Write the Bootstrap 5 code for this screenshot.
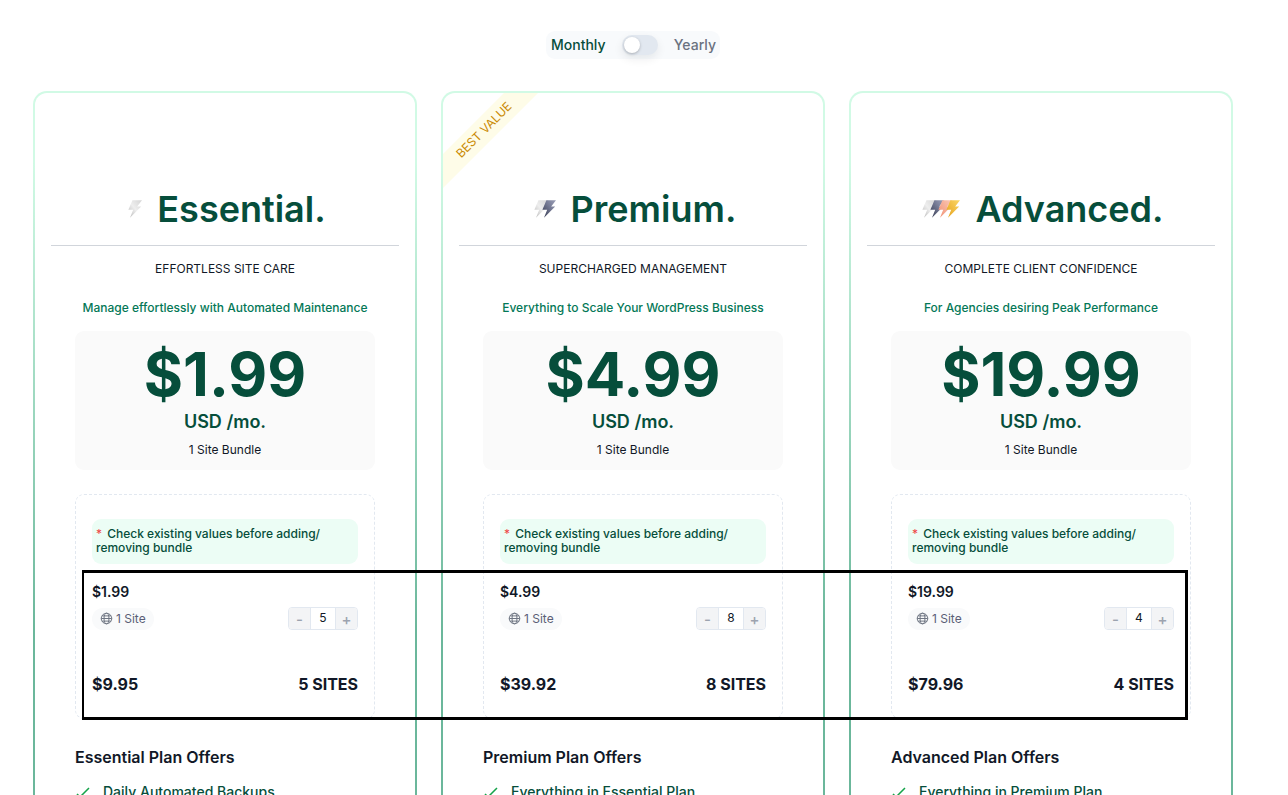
<!DOCTYPE html>
<html lang="en">
<head>
  <meta charset="utf-8"/>
  <title>Pricing</title>
  <link href="https://cdn.jsdelivr.net/npm/bootstrap@5.3.0/dist/css/bootstrap.min.css" rel="stylesheet"/>
  <style>
    html, body { height: 795px; overflow: hidden; }
    body { font-family: Inter, "Liberation Sans", sans-serif; color: #111827; background: #fff; position: relative; }
    .page-wrap { width: 1200px; margin-left: 33px; padding-top: 31px; }
    .period-switch { width: 174px; height: 28px; margin: 0 auto 32px; background: #f8fafc; border-radius: 9px; padding: 0 4px 2px 5px; font-size: 14px; font-weight: 500; color: #6b7280; }
    .period-on { color: #064e3b; }
    .switch-track { width: 36px; height: 20px; margin-top: 2px; background: #e2e8f0; border-radius: 10px; padding: 2px; box-shadow: 0 4px 10px rgba(15,23,42,.08); }
    .switch-knob { display: block; width: 16px; height: 16px; background: #fff; border-radius: 50%; box-shadow: 0 1px 3px rgba(0,0,0,.25); }
    .plan-row { display: grid; grid-template-columns: repeat(3, 384px); gap: 24px; }
    .plan-box { position: relative; height: 900px; border: 2px solid transparent; border-radius: 14px; padding: 0 16px; overflow: hidden;
      background: linear-gradient(#fff, #fff) padding-box, linear-gradient(180deg, #d1fae5 0, #d1fae5 8%, #6bb79b 60%, #6bb79b 100%) border-box; }
    .ribbon-wrap { position: absolute; top: 0; left: 0; width: 100px; height: 100px; overflow: hidden; }
    .ribbon-text { position: absolute; top: 25px; left: -44px; width: 170px; height: 24px; line-height: 24px; transform: rotate(-45deg); background: #fefce8; color: #ca8a04; font-size: 12px; text-align: center; text-transform: uppercase; }
    .plan-head { height: 153px; padding: 92px 0 12px 2px; border-bottom: 1px solid #d1d5db; color: #064e3b; font-size: 36px; font-weight: 600; line-height: 48px; gap: 15px; margin-bottom: 0; }
    .bolt-set { display: flex; align-items: center; }
    .bolt-set svg + svg { margin-left: -8px; }
    .plan-tag { font-size: 12px; line-height: 16px; margin-top: 15px; color: #111827; }
    .plan-desc { font-size: 12px; font-weight: 500; line-height: 16px; margin-top: 23px; color: #047857; }
    .price-panel { width: 300px; height: 139px; margin: 15px auto 0; background: #fafafa; border-radius: 9px; padding-top: 10px; }
    .price-big { font-size: 60px; font-weight: 700; line-height: 66px; color: #064e3b; }
    .price-unit { font-size: 18px; font-weight: 600; line-height: 24px; color: #064e3b; margin-top: 3px; }
    .price-note { font-size: 12px; line-height: 16px; margin-top: 8px; }
    .bundle-panel { width: 300px; height: 225px; margin: 24px auto 0; border: 1px dashed #e2e8f0; border-radius: 9px; padding: 24px 16px 0; }
    .bundle-warn { background: #ecfdf5; color: #064e3b; font-size: 12px; font-weight: 500; line-height: 14px; border-radius: 9px; padding: 8px 4px; height: 45px; }
    .bundle-warn b { color: #ef4444; font-weight: 400; margin-right: 2px; }
    .unit-price { font-size: 14px; font-weight: 600; line-height: 20px; margin-top: 18px; }
    .site-row { margin-top: 5px; }
    .site-chip { display: inline-flex; align-items: center; gap: 3px; height: 22px; padding: 0 8px; background: #f9fafb; border-radius: 11px; font-size: 12px; color: #5b5f77; }
    .qty-box { display: flex; height: 23px; border: 1px solid #e2e8f0; border-radius: 4px; font-size: 12px; overflow: hidden; }
    .qty-btn { width: 21px; background: #f3f4f6; color: #9ca3af; font-size: 15px; font-weight: 500; line-height: 23px; text-align: center; }
    .qty-val { width: 26px; line-height: 19px; text-align: center; border-left: 1px solid #e2e8f0; border-right: 1px solid #e2e8f0; background: #fff; }
    .total-row { font-size: 16px; font-weight: 700; line-height: 22px; margin-top: 43px; }
    .offer-title { width: 300px; margin: 27px auto 0; font-size: 16px; font-weight: 600; line-height: 22px; }
    .offer-list { width: 300px; margin: 14px auto 0; padding: 0; list-style: none; font-size: 14px; font-weight: 500; line-height: 20px; color: #064e3b; }
    .offer-list li { display: flex; gap: 12px; align-items: center; }
    .frame-mark { position: absolute; left: 82px; top: 570px; width: 1106px; height: 150px; border: 3px solid #000; border-left-width: 2px; pointer-events: none; }
  </style>
</head>
<body>

<svg width="0" height="0" class="d-block">
  <defs>
    <linearGradient id="boltGrey" x1="0" y1="1" x2="1" y2="0"><stop offset="0" stop-color="#b8b8b8"/><stop offset=".5" stop-color="#eeeeee"/><stop offset="1" stop-color="#d4d4d4"/></linearGradient>
    <linearGradient id="boltSlate" x1="0" y1="1" x2="1" y2="0"><stop offset="0" stop-color="#33384f"/><stop offset=".6" stop-color="#777c96"/><stop offset="1" stop-color="#9ca0b8"/></linearGradient>
    <linearGradient id="boltPeach" x1="0" y1="1" x2="1" y2="0"><stop offset="0" stop-color="#f08f72"/><stop offset="1" stop-color="#fbc9b8"/></linearGradient>
    <linearGradient id="boltGold" x1="0" y1="1" x2="1" y2="0"><stop offset="0" stop-color="#e5a11c"/><stop offset="1" stop-color="#fbd767"/></linearGradient>
    <symbol id="bolt" viewBox="0 0 20 22"><path d="M8 0h12l-6 8h5L5 22l4-10H3z"/></symbol>
    <symbol id="globe" viewBox="0 0 16 16"><g fill="none" stroke="#6b7280" stroke-width="1.2"><circle cx="8" cy="8" r="6.5"/><ellipse cx="8" cy="8" rx="3" ry="6.5"/><path d="M1.5 8h13M2.5 4.8h11M2.5 11.2h11"/></g></symbol>
  </defs>
</svg>

<div class="page-wrap">
  <div class="period-switch d-flex align-items-center justify-content-between">
    <span class="period-on">Monthly</span>
    <span class="switch-track"><span class="switch-knob"></span></span>
    <span>Yearly</span>
  </div>

  <div class="plan-row">
    <!-- Essential -->
    <div class="plan-box">
      <div class="plan-head d-flex align-items-center justify-content-center">
        <span class="bolt-set"><svg width="16" height="22" fill="url(#boltGrey)"><use href="#bolt"/></svg></span>
        <span>Essential.</span>
      </div>
      <div class="plan-tag text-center">EFFORTLESS SITE CARE</div>
      <div class="plan-desc text-center">Manage effortlessly with Automated Maintenance</div>
      <div class="price-panel text-center">
        <div class="price-big">$1.99</div>
        <div class="price-unit">USD /mo.</div>
        <div class="price-note">1 Site Bundle</div>
      </div>
      <div class="bundle-panel">
        <div class="bundle-warn"><b>*</b> Check existing values before adding/ removing bundle</div>
        <div class="unit-price">$1.99</div>
        <div class="site-row d-flex justify-content-between align-items-center">
          <span class="site-chip"><svg width="13" height="13"><use href="#globe"/></svg>1 Site</span>
          <div class="qty-box"><span class="qty-btn">-</span><span class="qty-val">5</span><span class="qty-btn">+</span></div>
        </div>
        <div class="total-row d-flex justify-content-between"><span>$9.95</span><span>5 SITES</span></div>
      </div>
      <div class="offer-title">Essential Plan Offers</div>
      <ul class="offer-list">
        <li><svg width="16" height="16" viewBox="0 0 16 16" fill="none" stroke="#16a34a" stroke-width="1.5"><path d="M2 10l3 3 9-9"/></svg>Daily Automated Backups</li>
      </ul>
    </div>

    <!-- Premium -->
    <div class="plan-box">
      <div class="ribbon-wrap"><div class="ribbon-text">Best Value</div></div>
      <div class="plan-head d-flex align-items-center justify-content-center">
        <span class="bolt-set"><svg width="16" height="22" fill="url(#boltGrey)"><use href="#bolt"/></svg><svg width="16" height="22" fill="url(#boltSlate)"><use href="#bolt"/></svg></span>
        <span>Premium.</span>
      </div>
      <div class="plan-tag text-center">SUPERCHARGED MANAGEMENT</div>
      <div class="plan-desc text-center">Everything to Scale Your WordPress Business</div>
      <div class="price-panel text-center">
        <div class="price-big">$4.99</div>
        <div class="price-unit">USD /mo.</div>
        <div class="price-note">1 Site Bundle</div>
      </div>
      <div class="bundle-panel">
        <div class="bundle-warn"><b>*</b> Check existing values before adding/ removing bundle</div>
        <div class="unit-price">$4.99</div>
        <div class="site-row d-flex justify-content-between align-items-center">
          <span class="site-chip"><svg width="13" height="13"><use href="#globe"/></svg>1 Site</span>
          <div class="qty-box"><span class="qty-btn">-</span><span class="qty-val">8</span><span class="qty-btn">+</span></div>
        </div>
        <div class="total-row d-flex justify-content-between"><span>$39.92</span><span>8 SITES</span></div>
      </div>
      <div class="offer-title">Premium Plan Offers</div>
      <ul class="offer-list">
        <li><svg width="16" height="16" viewBox="0 0 16 16" fill="none" stroke="#16a34a" stroke-width="1.5"><path d="M2 10l3 3 9-9"/></svg>Everything in Essential Plan</li>
      </ul>
    </div>

    <!-- Advanced -->
    <div class="plan-box">
      <div class="plan-head d-flex align-items-center justify-content-center">
        <span class="bolt-set"><svg width="16" height="22" fill="url(#boltGrey)"><use href="#bolt"/></svg><svg width="16" height="22" fill="url(#boltSlate)"><use href="#bolt"/></svg><svg width="16" height="22" fill="url(#boltPeach)"><use href="#bolt"/></svg><svg width="16" height="22" fill="url(#boltGold)"><use href="#bolt"/></svg></span>
        <span>Advanced.</span>
      </div>
      <div class="plan-tag text-center">COMPLETE CLIENT CONFIDENCE</div>
      <div class="plan-desc text-center">For Agencies desiring Peak Performance</div>
      <div class="price-panel text-center">
        <div class="price-big">$19.99</div>
        <div class="price-unit">USD /mo.</div>
        <div class="price-note">1 Site Bundle</div>
      </div>
      <div class="bundle-panel">
        <div class="bundle-warn"><b>*</b> Check existing values before adding/ removing bundle</div>
        <div class="unit-price">$19.99</div>
        <div class="site-row d-flex justify-content-between align-items-center">
          <span class="site-chip"><svg width="13" height="13"><use href="#globe"/></svg>1 Site</span>
          <div class="qty-box"><span class="qty-btn">-</span><span class="qty-val">4</span><span class="qty-btn">+</span></div>
        </div>
        <div class="total-row d-flex justify-content-between"><span>$79.96</span><span>4 SITES</span></div>
      </div>
      <div class="offer-title">Advanced Plan Offers</div>
      <ul class="offer-list">
        <li><svg width="16" height="16" viewBox="0 0 16 16" fill="none" stroke="#16a34a" stroke-width="1.5"><path d="M2 10l3 3 9-9"/></svg>Everything in Premium Plan</li>
      </ul>
    </div>
  </div>
</div>

<div class="frame-mark"></div>

<script src="https://cdn.jsdelivr.net/npm/bootstrap@5.3.0/dist/js/bootstrap.bundle.min.js"></script>
</body>
</html>
